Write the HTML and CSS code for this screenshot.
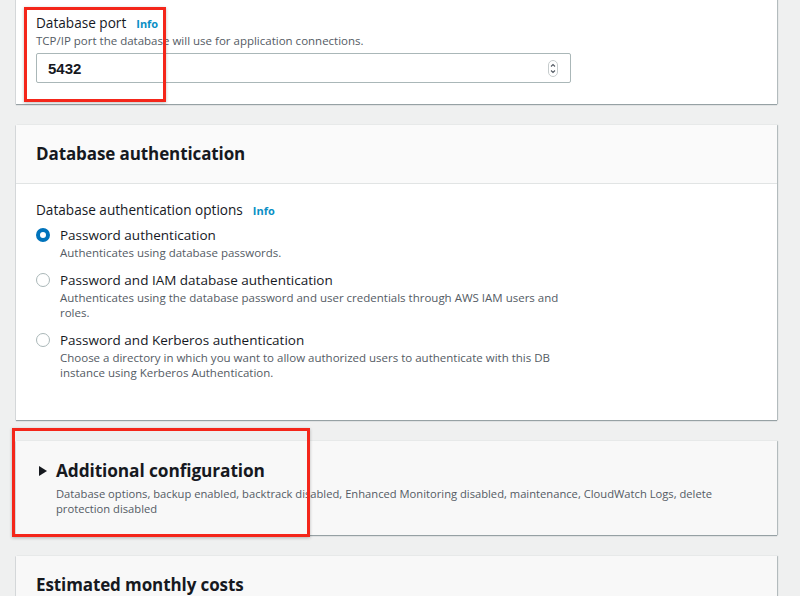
FILE: index.html
```html
<!DOCTYPE html>
<html lang="en">
<head>
<meta charset="utf-8">
<link rel="stylesheet" href="styles.css">
</head>
<body>
<div class="page">
  <section class="card card-port">
    <div class="card-body port-body">
      <div class="label-row"><span class="label">Database port</span><span class="info">Info</span></div>
      <div class="desc">TCP/IP port the database will use for application connections.</div>
      <div class="input">
        <span class="value">5432</span>
        <span class="stepper">
          <svg width="10" height="17" viewBox="0 0 10 17"><rect x="0.5" y="0.5" width="9" height="16" rx="4.5" fill="#fff" stroke="#c6cccd"/><path d="M3 6.5 L5 4.5 L7 6.5" fill="none" stroke="#545b64" stroke-width="1.1"/><path d="M3 10.5 L5 12.5 L7 10.5" fill="none" stroke="#545b64" stroke-width="1.1"/></svg>
        </span>
      </div>
    </div>
  </section>

  <section class="card card-auth">
    <header class="card-header"><h2>Database authentication</h2></header>
    <div class="card-body auth-body">
      <div class="label-row"><span class="label">Database authentication options</span><span class="info">Info</span></div>
      <div class="radios">
        <div class="radio-row">
          <span class="radio checked"></span>
          <div class="radio-text">
            <div class="radio-label">Password authentication</div>
            <div class="desc">Authenticates using database passwords.</div>
          </div>
        </div>
        <div class="radio-row">
          <span class="radio"></span>
          <div class="radio-text">
            <div class="radio-label">Password and IAM database authentication</div>
            <div class="desc">Authenticates using the database password and user credentials through AWS IAM users and roles.</div>
          </div>
        </div>
        <div class="radio-row">
          <span class="radio"></span>
          <div class="radio-text">
            <div class="radio-label">Password and Kerberos authentication</div>
            <div class="desc">Choose a directory in which you want to allow authorized users to authenticate with this DB instance using Kerberos Authentication.</div>
          </div>
        </div>
      </div>
    </div>
  </section>

  <section class="card card-grey card-additional">
    <div class="exp-row">
      <span class="caret"></span>
      <div class="exp-text">
        <h2>Additional configuration</h2>
        <div class="desc wide">Database options, backup enabled, backtrack disabled, Enhanced Monitoring disabled, maintenance, CloudWatch Logs, delete protection disabled</div>
      </div>
    </div>
  </section>

  <section class="card card-grey card-costs">
    <h2>Estimated monthly costs</h2>
  </section>

  <div class="mark mark-port"></div>
  <div class="mark mark-additional"></div>
</div>
</body>
</html>
```

FILE: styles.css
```css
* { box-sizing: border-box; }
html, body { margin: 0; padding: 0; }
body {
  background: #eff0f0;
  font-family: "Open Sans", "Noto Sans", sans-serif;
  color: #16191f;
  width: 800px;
  height: 596px;
  overflow: hidden;
}
.page {
  position: relative;
  padding: 0 23px 0 16px;
  display: flex;
  flex-direction: column;
  gap: 21px;
  margin-top: -20px;
}
.card {
  background: #fff;
  box-shadow: 0 1px 1px 0 rgba(0,28,36,.35), 1px 0 1px 0 rgba(0,28,36,.2), -1px 0 0 0 rgba(0,28,36,.05);
}
.card-grey { background: #f8f8f8; }
.card-port { height: 124px; }
.port-body { padding: 33px 20px 0 20px; }
.label-row { display: flex; align-items: baseline; gap: 10px; }
.label { font-size: 13.6px; line-height: 20px; }
.info { font-size: 11px; font-weight: 700; color: #0a8fc5; }
.desc { font-size: 11.5px; line-height: 15px; color: #545b64; }
.input {
  margin-top: 5px;
  width: 535px;
  height: 30px;
  border: 1px solid #aab7b8;
  border-radius: 2px;
  display: flex;
  align-items: center;
  justify-content: space-between;
  padding: 0 12px 0 11px;
}
.value { font-family: "Liberation Sans", Arial, sans-serif; font-weight: 700; font-size: 15px; }
.stepper { display: flex; }
.card-auth { height: 295px; }
.card-header {
  background: #fafafa;
  border-bottom: 1px solid #e1e4e4;
  height: 59px;
  padding: 0 20px;
  display: flex;
  align-items: center;
}
h2 { margin: 0; font-size: 17px; font-weight: 700; line-height: 22px; letter-spacing: -0.1px; }
.auth-body { padding: 16px 20px 0 20px; }
.radios { display: flex; flex-direction: column; gap: 10px; margin-top: 5px; }
.radio-row { display: flex; gap: 10px; align-items: flex-start; }
.radio {
  width: 14px; height: 14px; border-radius: 50%;
  border: 1px solid #aab7b8; background: #fff;
  margin-top: 3px;
  flex: none;
}
.radio.checked { border: 4px solid #0073bb; }
.radio-text { width: 520px; }
.radio-label { font-size: 13.5px; line-height: 20px; }
.radio-text .desc { margin-top: 0; }
.card-additional { height: 94px; padding: 18px 20px 0 23px; }
.exp-row { display: flex; gap: 9px; align-items: flex-start; }
.caret {
  margin-top: 7px;
  width: 0; height: 0;
  border-top: 5px solid transparent;
  border-bottom: 5px solid transparent;
  border-left: 8px solid #16191f;
  flex: none;
}
.exp-text h2 { line-height: 24px; font-size: 17.3px; }
.desc.wide { margin-top: 3px; width: 700px; font-size: 11.2px; }
.card-costs { height: 60px; padding: 18px 20px 0 20px; }
.mark {
  position: absolute;
  border: 3px solid #f4261a;
  box-shadow: 0 1px 3px rgba(0,0,0,.25);
}
.mark-port { left: 24px; top: 27px; width: 142px; height: 95px; }
.mark-additional { left: 12px; top: 448px; width: 298px; height: 109px; }
```
